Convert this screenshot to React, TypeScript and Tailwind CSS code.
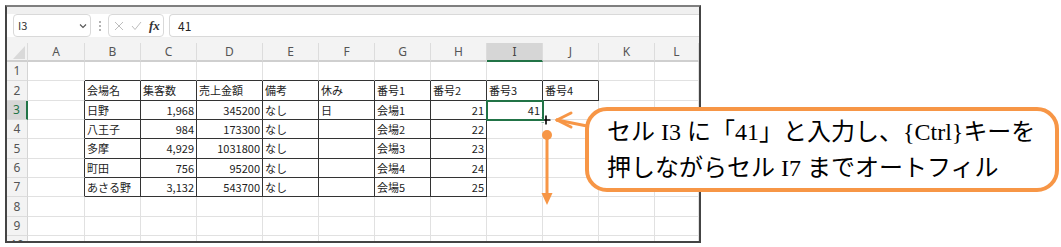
import React from "react";

const COLS = ["A", "B", "C", "D", "E", "F", "G", "H", "I", "J", "K", "L"];
const ROWS = [1, 2, 3, 4, 5, 6, 7, 8, 9, 10];

// sheet values, index = column (A..L)
const DATA: Record<number, (string | null)[]> = {
  2: [null, "会場名", "集客数", "売上金額", "備考", "休み", "番号1", "番号2", "番号3", "番号4", null, null],
  3: [null, "日野", "1,968", "345200", "なし", "日", "会場1", "21", "41", null, null, null],
  4: [null, "八王子", "984", "173300", "なし", null, "会場2", "22", null, null, null, null],
  5: [null, "多摩", "4,929", "1031800", "なし", null, "会場3", "23", null, null, null, null],
  6: [null, "町田", "756", "95200", "なし", null, "会場4", "24", null, null, null, null],
  7: [null, "あさる野", "3,132", "543700", "なし", null, "会場5", "25", null, null, null, null],
};

const NUM_COLS = [2, 3, 7, 8];

const rightDark = (r: number, c: number) =>
  (r === 2 && c <= 9) || (r >= 3 && r <= 7 && c <= 7);
const bottomDark = (r: number, c: number) =>
  ((r === 1 || r === 2) && c >= 1 && c <= 9) || (r >= 3 && r <= 7 && c >= 1 && c <= 7);

function FormulaBar() {
  return (
    <div className="h-[30px] bg-white">
      <div className="h-[7px] bg-[#f0f0f0]" />
      <div className="flex h-[23px] items-stretch pl-[6px]">
        <div className="flex w-[78px] items-center justify-between rounded-[4px] border border-[#d9d9d9] bg-white pl-[4px] pr-[3px] text-[11px] text-[#333]">
          <span>I3</span>
          <svg width="8" height="6" viewBox="0 0 8 6">
            <path d="M1 1.5 L4 4.5 L7 1.5" fill="none" stroke="#555" strokeWidth="1.1" />
          </svg>
        </div>
        <div className="flex w-[17px] flex-col items-center justify-center gap-[2px]">
          <span className="h-[2px] w-[2px] rounded-full bg-[#9a9a9a]" />
          <span className="h-[2px] w-[2px] rounded-full bg-[#9a9a9a]" />
          <span className="h-[2px] w-[2px] rounded-full bg-[#9a9a9a]" />
        </div>
        <div className="flex w-[56px] items-center gap-[7px] rounded-[4px] border border-[#d9d9d9] bg-white pl-[5px]">
          <svg width="10" height="10" viewBox="0 0 10 10">
            <path d="M1 1 L9 9 M9 1 L1 9" stroke="#bdbdbd" strokeWidth="1" />
          </svg>
          <svg width="11" height="10" viewBox="0 0 11 10">
            <path d="M1 5 L4 8.5 L10 1" fill="none" stroke="#bdbdbd" strokeWidth="1" />
          </svg>
          <span className="font-['Liberation_Serif',serif] text-[13px] font-bold italic leading-none text-[#333]">fx</span>
        </div>
        <div className="ml-[5px] flex flex-1 items-center rounded-l-[4px] border border-r-0 border-[#d9d9d9] bg-white pl-[8px] text-[12px] text-[#222]">
          41
        </div>
      </div>
    </div>
  );
}

function Sheet() {
  return (
    <div className="grid grid-cols-[21px_57px_56px_56px_66px_56px_56px_56px_56px_56px_56px_56px_44px] grid-rows-[19px_19px_20px_19px_19px_20px_19px_19px_20px_19px_19px] overflow-hidden">
      {/* header row */}
      <div className="relative border-r border-b-2 border-r-[#dcdcdc] border-b-[#cfcfcf] bg-[#f3f3f3]">
        <svg className="absolute right-[2px] bottom-[1px]" width="12" height="13" viewBox="0 0 12 13">
          <path d="M12 0 L12 13 L0 13 Z" fill="#d9d9d9" />
        </svg>
      </div>
      {COLS.map((c) => (
        <div
          key={c}
          className={
            c === "I"
              ? "flex items-center justify-center border-r border-b-2 border-r-[#dcdcdc] border-b-[#217346] bg-[#d6d6d6] font-['Noto_Sans',sans-serif] text-[12px] text-[#444]"
              : "flex items-center justify-center border-r border-b-2 border-r-[#dcdcdc] border-b-[#cfcfcf] bg-[#f3f3f3] font-['Noto_Sans',sans-serif] text-[12px] text-[#555]"
          }
        >
          {c}
        </div>
      ))}

      {ROWS.map((r) => (
        <React.Fragment key={r}>
          <div
            className={
              r === 3
                ? "flex items-center justify-center border-r-2 border-b border-r-[#217346] border-b-[#dcdcdc] bg-[#d6d6d6] font-['Noto_Sans',sans-serif] text-[12px] text-[#217346]"
                : "flex items-center justify-center border-r border-b border-r-[#d4d4d4] border-b-[#dcdcdc] bg-[#f3f3f3] font-['Noto_Sans',sans-serif] text-[12px] text-[#555]"
            }
          >
            {r}
          </div>
          {COLS.map((_, ci) => {
            const v = DATA[r]?.[ci] ?? null;
            const right = r >= 3 && NUM_COLS.includes(ci);
            return (
              <div
                key={ci}
                className={[
                  "relative flex items-center whitespace-nowrap border-r border-b px-[2px] text-[11px] text-[#222]",
                  rightDark(r, ci) ? "border-r-[#333]" : "border-r-[#e1e1e1]",
                  bottomDark(r, ci) ? "border-b-[#333]" : "border-b-[#e1e1e1]",
                  right ? "justify-end" : "justify-start",
                ].join(" ")}
              >
                {v}
                {r === 3 && ci === 8 && (
                  <div className="absolute -left-[1px] -top-[1px] z-10 h-[21px] w-[58px] border-2 border-[#217346]" />
                )}
              </div>
            );
          })}
        </React.Fragment>
      ))}
    </div>
  );
}

export default function App() {
  return (
    <div className="relative h-[247px] w-[1061px] overflow-hidden bg-white font-['Noto_Sans_CJK_JP',sans-serif]">
      {/* spreadsheet screenshot */}
      <div className="ml-[5px] mt-[5px] h-[238px] w-[696px] overflow-hidden border-2 border-[#444] border-t-[#7f7f7f] bg-white">
        <FormulaBar />
        <div className="h-[6px] bg-[#f3f3f3]" />
        <Sheet />
      </div>

      {/* callout */}
      <div className="absolute left-[585px] top-[107px] flex h-[85px] w-[474px] flex-col justify-center rounded-[22px] border-4 border-[#f79646] bg-white pl-[18px] font-['Liberation_Serif','Noto_Sans_CJK_JP',serif] text-[24px] leading-[36px] text-black">
        <p>セル I3 に「41」と入力し、{"{Ctrl}"}キーを</p>
        <p>押しながらセル I7 までオートフィル</p>
      </div>

      {/* arrows + fill cursor */}
      <svg className="pointer-events-none absolute left-0 top-0" width="1061" height="247" viewBox="0 0 1061 247">
        <g stroke="#f79646" strokeWidth="3" strokeLinecap="round" fill="none">
          <path d="M557 120 L587 126" />
          <path d="M557 120 L571 113" />
          <path d="M557 120 L571 127" />
          <path d="M547 135 L547 196" />
        </g>
        <circle cx="547" cy="135" r="5" fill="#f79646" />
        <path d="M541.5 193 L552.5 193 L547 205 Z" fill="#f79646" />
        <rect x="541" y="117" width="6" height="6" fill="#217346" stroke="#fff" strokeWidth="1" />
        <path d="M546 115 L546 125 M541 120 L551 120" stroke="#fff" strokeWidth="4" />
        <path d="M546 115.5 L546 124.5 M541.5 120 L550.5 120" stroke="#000" strokeWidth="1.6" />
      </svg>
    </div>
  );
}
